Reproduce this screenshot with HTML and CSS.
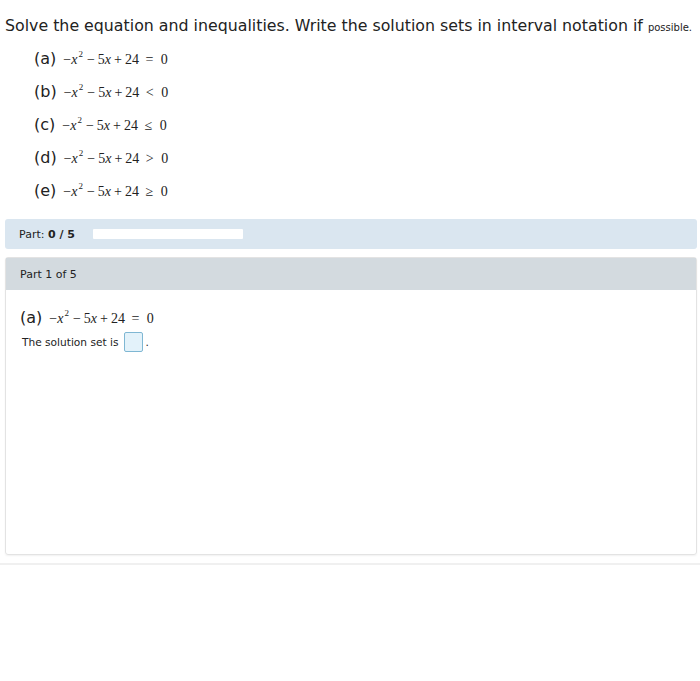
FILE: index.html
```html
<!DOCTYPE html>
<html lang="en">
<head>
    <meta charset="UTF-8">
    <title>Equation and inequalities</title>
    <link rel="stylesheet" href="styles.css">
</head>
<body>
    <div class="prompt">
        Solve the equation and inequalities. Write the solution sets in interval notation if <span class="small">possible.</span>
    </div>
    <div class="items">
        <div class="item"><span class="lbl">(a)</span><span class="math">&minus;<i>x</i><sup>2</sup><span class="op">&minus;</span>5<i>x</i><span class="op">+</span>24 <span class="rel">=</span> 0</span></div>
        <div class="item"><span class="lbl">(b)</span><span class="math">&minus;<i>x</i><sup>2</sup><span class="op">&minus;</span>5<i>x</i><span class="op">+</span>24 <span class="rel">&lt;</span> 0</span></div>
        <div class="item"><span class="lbl">(c)</span><span class="math">&minus;<i>x</i><sup>2</sup><span class="op">&minus;</span>5<i>x</i><span class="op">+</span>24 <span class="rel">&le;</span> 0</span></div>
        <div class="item"><span class="lbl">(d)</span><span class="math">&minus;<i>x</i><sup>2</sup><span class="op">&minus;</span>5<i>x</i><span class="op">+</span>24 <span class="rel">&gt;</span> 0</span></div>
        <div class="item"><span class="lbl">(e)</span><span class="math">&minus;<i>x</i><sup>2</sup><span class="op">&minus;</span>5<i>x</i><span class="op">+</span>24 <span class="rel">&ge;</span> 0</span></div>
    </div>

    <div class="progress">
        <span>Part: <b>0 / 5</b></span>
        <div class="bar"></div>
    </div>

    <div class="panel">
        <div class="panel-head">Part 1 of 5</div>
        <div class="panel-body">
            <div class="item inner"><span class="lbl">(a)</span><span class="math">&minus;<i>x</i><sup>2</sup><span class="op">&minus;</span>5<i>x</i><span class="op">+</span>24 <span class="rel">=</span> 0</span></div>
            <div class="answer">The solution set is <span class="box"></span>.</div>
        </div>
    </div>
    <div class="rule"></div>
</body>
</html>
```

FILE: styles.css
```css
body {
    margin: 0;
    font-family: "DejaVu Sans", Verdana, sans-serif;
    color: #222;
    background: #fff;
}
.prompt {
    padding: 15px 0 0 5px;
    font-size: 15.8px;
    line-height: 22px;
    white-space: nowrap;
}
.small {
    font-size: 10px;
}
.items {
    padding: 10px 0 0 34px;
}
.item {
    display: flex;
    align-items: baseline;
    height: 33px;
}
.lbl {
    font-size: 16px;
    margin-right: 7px;
}
.math {
    font-family: "Liberation Serif", "Times New Roman", serif;
    font-size: 14px;
    white-space: nowrap;
}
.math i {
    font-style: italic;
}
.math sup {
    font-size: 9px;
    position: relative;
    top: -7px;
    margin: 0 1px;
    vertical-align: baseline;
}
.op {
    margin: 0 3px;
}
.rel {
    margin: 0 4px 0 3px;
}
.progress {
    margin: 5px 3px 0 5px;
    height: 30px;
    background: #dae6f0;
    border-radius: 3px;
    display: flex;
    align-items: center;
    padding-left: 14px;
    font-size: 11px;
}
.progress b {
    font-weight: bold;
}
.bar {
    width: 150px;
    height: 10px;
    background: #fff;
    margin-left: 18px;
    border-radius: 1px;
}
.panel {
    margin: 8px 3px 0 5px;
    border: 1px solid #e3e3e3;
    border-radius: 3px;
    height: 296px;
    box-shadow: 0 1px 2px rgba(0, 0, 0, 0.06);
}
.panel-head {
    background: #d3dadf;
    height: 32px;
    display: flex;
    align-items: center;
    padding-left: 14px;
    font-size: 11px;
}
.panel-body {
    padding: 18px 0 0 14px;
}
.inner {
    height: 24px;
}
.answer {
    font-size: 10.6px;
    padding-left: 2px;
    display: flex;
    align-items: center;
}
.box {
    display: inline-block;
    width: 17px;
    height: 18px;
    border: 1px solid #7fb7d3;
    background: #e3f2fa;
    border-radius: 2px;
    margin: 0 2px 0 6px;
}
.rule {
    margin-top: 8px;
    border-top: 2px solid #f0f0f0;
}
```
